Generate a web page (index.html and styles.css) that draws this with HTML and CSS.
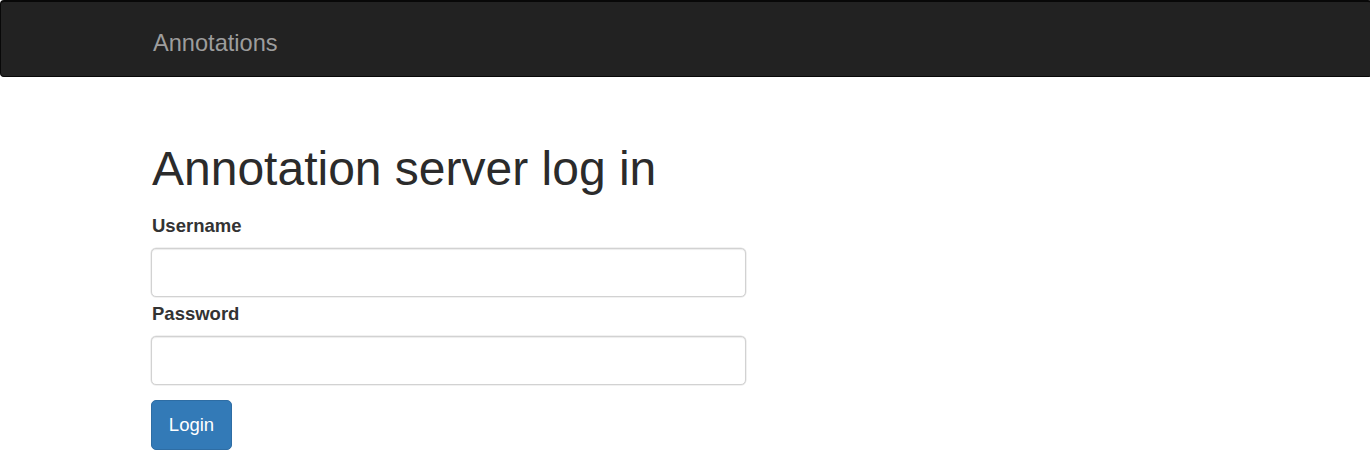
FILE: index.html
```html
<!DOCTYPE html>
<html lang="en">
<head>
<meta charset="utf-8">
<title>Annotation server log in</title>
<link rel="stylesheet" href="styles.css">
</head>
<body>
<nav class="navbar">
  <div class="container">
    <a class="brand" href="#">Annotations</a>
  </div>
</nav>
<main class="container">
  <h1 class="title">Annotation server log in</h1>
  <form class="login-form">
    <label class="field-label" for="username">Username</label>
    <input class="field-input" id="username" type="text">
    <label class="field-label field-label-2" for="password">Password</label>
    <input class="field-input" id="password" type="password">
    <button class="btn-primary" type="submit">Login</button>
  </form>
</main>
</body>
</html>
```
FILE: styles.css
```css
html, body {
  margin: 0;
  padding: 0;
  background: #fff;
  color: #333;
  font-family: "Liberation Sans", Arial, sans-serif;
}

.navbar {
  box-sizing: border-box;
  height: 77px;
  margin-right: -2px;
  background: #222;
  border: 1px solid #080808;
  border-top-width: 2px;
  border-radius: 4px;
}

.container {
  padding-left: 151px;
}

.brand {
  display: inline-block;
  margin-left: 1px;
  padding-top: 29px;
  font-size: 23.6px;
  line-height: 24px;
  color: #9d9d9d;
  text-decoration: none;
}

.title {
  margin: 63px 0 0 1px;
  font-size: 48px;
  line-height: 57px;
  font-weight: 400;
  color: #2b2b2b;
}

.login-form {
  display: flex;
  flex-direction: column;
  align-items: flex-start;
  margin-top: 18px;
}

.field-label {
  margin-left: 1px;
  font-size: 18.5px;
  line-height: 22px;
  font-weight: 700;
  color: #333;
}

.field-label-2 {
  margin-top: 6px;
}

.field-input {
  box-sizing: border-box;
  width: 595px;
  height: 49px;
  margin: 11px 0 0;
  padding: 6px 12px;
  background: #fff;
  border: 1px solid #d2d2d2;
  border-radius: 5px;
  box-shadow: inset 0 1px 1px rgba(0, 0, 0, 0.075), 0 0 0 0.5px #e4e4e4;
  font: 18px "Liberation Sans", Arial, sans-serif;
}

.btn-primary {
  box-sizing: border-box;
  width: 81px;
  height: 50px;
  margin-top: 15px;
  padding: 0;
  background: #337ab7;
  border: 1px solid #2e6da4;
  border-radius: 5px;
  color: #fff;
  font: 18.5px "Liberation Sans", Arial, sans-serif;
  cursor: pointer;
}
```
